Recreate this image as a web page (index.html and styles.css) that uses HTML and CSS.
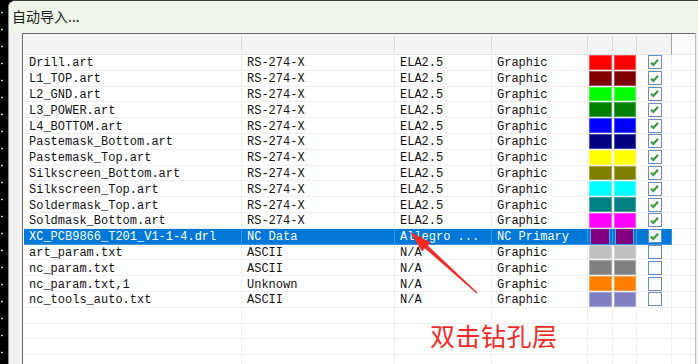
FILE: index.html
```html
<!DOCTYPE html>
<html lang="zh-CN">
<head>
  <meta charset="UTF-8" />
  <title>自动导入...</title>
  <link rel="stylesheet" href="styles.css">
</head>
<body>
  <div class="desk-strip"></div>

  <div class="window">
    <div class="title-bar">自动导入...</div>

    <div class="client">
      <div class="list">
        <!-- header -->
        <div class="row head">
          <div class="cell"></div>
          <div class="cell"></div>
          <div class="cell"></div>
          <div class="cell"></div>
          <div class="cell"></div>
          <div class="cell"></div>
          <div class="cell"></div>
          <div class="cell filler"></div>
        </div>

        <div id="rows"></div>
      </div>
    </div>
  </div>

  <!-- annotation over the list -->
  <svg class="arrow" width="698" height="364" viewBox="0 0 698 364">
    <polygon fill="#f42a26"
      points="410,232 431,242.6 427.8,245.6 477.4,292.5 476.6,293.5 424.8,248.2 422,251.4" />
  </svg>
  <div class="note">双击钻孔层</div>

  <script>
    (function () {
      const data = [
        ["Drill.art", "RS-274-X", "ELA2.5", "Graphic", "#ff0000", true],
        ["L1_TOP.art", "RS-274-X", "ELA2.5", "Graphic", "#800000", true],
        ["L2_GND.art", "RS-274-X", "ELA2.5", "Graphic", "#00ff00", true],
        ["L3_POWER.art", "RS-274-X", "ELA2.5", "Graphic", "#008000", true],
        ["L4_BOTTOM.art", "RS-274-X", "ELA2.5", "Graphic", "#0000ff", true],
        ["Pastemask_Bottom.art", "RS-274-X", "ELA2.5", "Graphic", "#000080", true],
        ["Pastemask_Top.art", "RS-274-X", "ELA2.5", "Graphic", "#ffff00", true],
        ["Silkscreen_Bottom.art", "RS-274-X", "ELA2.5", "Graphic", "#808000", true],
        ["Silkscreen_Top.art", "RS-274-X", "ELA2.5", "Graphic", "#00ffff", true],
        ["Soldermask_Top.art", "RS-274-X", "ELA2.5", "Graphic", "#008080", true],
        ["Soldmask_Bottom.art", "RS-274-X", "ELA2.5", "Graphic", "#ff00ff", true],
        ["XC_PCB9866_T201_V1-1-4.drl", "NC Data", "Allegro ...", "NC Primary", "#800080", true, "selected"],
        ["art_param.txt", "ASCII", "N/A", "Graphic", "#c0c0c0", false],
        ["nc_param.txt", "ASCII", "N/A", "Graphic", "#808080", false],
        ["nc_param.txt,1", "Unknown", "N/A", "Graphic", "#ff8000", false],
        ["nc_tools_auto.txt", "ASCII", "N/A", "Graphic", "#8080c0", false]
      ];

      const check =
        '<svg width="11" height="11" viewBox="0 0 11 11">' +
        '<path d="M2 5.6 L4.4 8 L9 2.8" fill="none" stroke="#3a9d3a" stroke-width="2.2"/></svg>';

      let html = "";
      data.forEach(function (d) {
        html +=
          '<div class="row ' + (d[6] || "") + '">' +
          '<div class="cell text">' + d[0] + "</div>" +
          '<div class="cell text">' + d[1] + "</div>" +
          '<div class="cell text">' + d[2] + "</div>" +
          '<div class="cell text">' + d[3] + "</div>" +
          '<div class="cell"><span class="swatch" style="background:' + d[4] + '"></span></div>' +
          '<div class="cell"><span class="swatch" style="background:' + d[4] + '"></span></div>' +
          '<div class="cell"><span class="checkbox">' + (d[5] ? check : "") + "</span></div>" +
          '<div class="cell filler"></div>' +
          "</div>";
      });

      // empty lines down to the bottom of the view
      for (let i = 0; i < 4; i++) {
        html += '<div class="row">' + '<div class="cell"></div>'.repeat(7) +
          '<div class="cell filler"></div></div>';
      }

      document.getElementById("rows").innerHTML = html;
    })();
  </script>
</body>
</html>
```

FILE: styles.css
```css
* {
  box-sizing: border-box;
}
body {
  margin: 0;
  width: 698px;
  height: 364px;
  overflow: hidden;
  display: flex;
  position: relative;
  background: #000;
  font-family: "Liberation Mono", monospace;
}
/* ---------- LEFT EDGE ---------- */
.desk-strip {
  width: 8px;
  flex: none;
  background-color: #000;
  background-image: radial-gradient(circle, #cfcfcf 0.8px, transparent 1.2px);
  background-size: 8px 17px;
  background-position: -2px 4px;
}
/* ---------- WINDOW ---------- */
.window {
  flex: 1;
  display: flex;
  flex-direction: column;
  background: #f0f0f0;
  border-top: 1px solid #3d3d3d;
  border-left: 1px solid #8e8e8e;
  border-top-left-radius: 7px;
  overflow: hidden;
}
.title-bar {
  height: 32px;
  flex: none;
  padding: 0 0 2px 3px;
  display: flex;
  align-items: center;
  background: #edf6e7;
  color: #1c1c1c;
  font-family: "Noto Sans CJK SC", sans-serif;
  font-size: 14px;
}
.client {
  flex: 1;
  padding: 0 2px 0 13px;
  overflow: hidden;
}
/* ---------- LIST VIEW ---------- */
.list {
  height: 100%;
  background: #fff;
  border-top: 1px solid #6a6a6a;
  border-left: 1px solid #6a6a6a;
  border-right: 1px solid #bdbdbd;
  padding-left: 1px;
}
.row {
  display: grid;
  grid-template-columns: 218px 153px 97px 96px 25px 24px 35px 1fr;
  height: 15.8px;
}
.cell {
  border-right: 1px solid #f0f0f0;
  border-bottom: 1px solid #f0f0f0;
  display: flex;
  align-items: center;
  justify-content: center;
  overflow: hidden;
}
.cell.text {
  justify-content: flex-start;
  padding: 2px 0 0 5px;
  font-size: 12px;
  color: #111;
  white-space: nowrap;
}
.filler {
  border-right: 0;
}
/* header */
.row.head {
  height: 21px;
}
.row.head .cell {
  background: #f4f4f4;
  border-bottom: 1px solid #e3e3e3;
  border-right: 0;
  position: relative;
}
.row.head .cell::after {
  content: "";
  position: absolute;
  right: 0;
  top: 2px;
  bottom: 3px;
  width: 1px;
  background: #d6d6d6;
}
.row.head .cell:nth-child(7) {
  border-right: 1px solid #a0a0a0;
}
.row.head .cell:nth-child(7)::after {
  display: none;
}
.row.head .filler {
  background: #fbfbfb;
  border-bottom: 1px solid #efefef;
}
.row.head .filler::after {
  display: none;
}
/* swatches and checkboxes */
.swatch {
  display: block;
  width: 100%;
  height: 100%;
  margin: 0 0 0 1px;
  box-shadow: inset 0 0 0 1px rgba(255, 255, 255, 0.3);
}
.checkbox {
  width: 14px;
  height: 14px;
  margin-left: 1px;
  background: #fff;
  border: 1px solid #6c8db8;
  display: flex;
  align-items: center;
  justify-content: center;
}
/* ---------- SELECTION ---------- */
.row.selected .cell {
  background: #0078d7;
  border-color: #3a95df;
}
.row.selected .cell.filler {
  background: #fff;
  border-color: #f0f0f0;
}
.row.selected .cell.text {
  color: #fff;
}
.row.selected .swatch {
  margin: 2px 3px;
  box-shadow: 0 0 0 1px #5aa5e3;
}
.row.selected .checkbox {
  background: #e9f3fb;
}
/* ---------- ANNOTATION ---------- */
.arrow {
  position: absolute;
  left: 0;
  top: 0;
  pointer-events: none;
}
.note {
  position: absolute;
  left: 430px;
  top: 323px;
  font-family: "Noto Sans CJK SC", sans-serif;
  font-size: 25px;
  line-height: 1;
  color: #f42a26;
  letter-spacing: 0.5px;
}
```
